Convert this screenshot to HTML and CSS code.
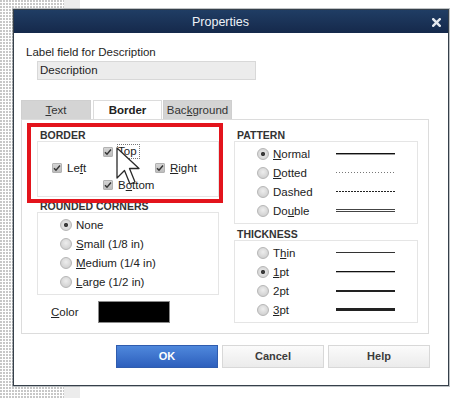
FILE: index.html
```html
<!DOCTYPE html>
<html>
<head>
<meta charset="utf-8">
<title>Properties</title>
<link rel="stylesheet" href="styles.css">
</head>
<body>
<div class="dialog">
  <div class="titlebar">
    <span class="title">Properties</span>
    <svg class="close" width="9" height="9" viewBox="0 0 9 9"><path d="M1.2 1.2 L7.8 7.8 M7.8 1.2 L1.2 7.8" stroke="#e4e8ee" stroke-width="2.4" stroke-linecap="square"/></svg>
  </div>
  <div class="content">
    <div class="field-label">Label field for Description</div>
    <div class="input">Description</div>

    <div class="tabs">
      <div class="tab t-text"><u>T</u>ext</div>
      <div class="tab t-border active">Border</div>
      <div class="tab t-bg">Bac<u>k</u>ground</div>
    </div>

    <div class="panel">
      <div class="col col-left">
        <div class="heading">BORDER</div>
        <div class="box border-box">
          <div class="cb cb-top"><span class="check"><svg width="8" height="8" viewBox="0 0 8 8"><path d="M1 4.2 L3 6.3 L7 1.5" fill="none" stroke="#333" stroke-width="1.4"/></svg></span><span class="focus"><u>T</u>op</span></div>
          <div class="cb cb-left"><span class="check"><svg width="8" height="8" viewBox="0 0 8 8"><path d="M1 4.2 L3 6.3 L7 1.5" fill="none" stroke="#333" stroke-width="1.4"/></svg></span><span>Le<u>f</u>t</span></div>
          <div class="cb cb-right"><span class="check"><svg width="8" height="8" viewBox="0 0 8 8"><path d="M1 4.2 L3 6.3 L7 1.5" fill="none" stroke="#333" stroke-width="1.4"/></svg></span><span><u>R</u>ight</span></div>
          <div class="cb cb-bottom"><span class="check"><svg width="8" height="8" viewBox="0 0 8 8"><path d="M1 4.2 L3 6.3 L7 1.5" fill="none" stroke="#333" stroke-width="1.4"/></svg></span><span>B<u>o</u>ttom</span></div>
        </div>

        <div class="heading gap-rc">ROUNDED CORNERS</div>
        <div class="box radio-box">
          <div class="row"><span class="radio on"></span><span>None</span></div>
          <div class="row"><span class="radio"></span><span><u>S</u>mall (1/8 in)</span></div>
          <div class="row"><span class="radio"></span><span><u>M</u>edium (1/4 in)</span></div>
          <div class="row"><span class="radio"></span><span><u>L</u>arge (1/2 in)</span></div>
        </div>

        <div class="color-row">
          <span class="color-label"><u>C</u>olor</span>
          <span class="swatch"></span>
        </div>
      </div>

      <div class="col col-right">
        <div class="heading">PATTERN</div>
        <div class="box radio-box lines">
          <div class="row"><span class="radio on"></span><span><u>N</u>ormal</span><span class="ln ln-normal"></span></div>
          <div class="row"><span class="radio"></span><span><u>D</u>otted</span><span class="ln ln-dotted"></span></div>
          <div class="row"><span class="radio"></span><span>Dashed</span><span class="ln ln-dashed"></span></div>
          <div class="row"><span class="radio"></span><span>Do<u>u</u>ble</span><span class="ln ln-double"></span></div>
        </div>

        <div class="heading gap-th">THICKNESS</div>
        <div class="box radio-box lines">
          <div class="row"><span class="radio"></span><span>T<u>h</u>in</span><span class="ln ln-thin"></span></div>
          <div class="row"><span class="radio on"></span><span><u>1</u>pt</span><span class="ln ln-1pt"></span></div>
          <div class="row"><span class="radio"></span><span>2pt</span><span class="ln ln-2pt"></span></div>
          <div class="row"><span class="radio"></span><span><u>3</u>pt</span><span class="ln ln-3pt"></span></div>
        </div>
      </div>

      <div class="annotation"></div>
      <svg class="cursor" width="25" height="40" viewBox="0 0 25 40"><path d="M1 1 L1 31 L8.5 23.5 L14 37 L19 35 L13.5 21.5 L23 21.5 Z" fill="#fff" stroke="#2a2a2a" stroke-width="1.3" stroke-linejoin="round"/></svg>
    </div>

    <div class="buttons">
      <div class="btn btn-ok">OK</div>
      <div class="btn">Cancel</div>
      <div class="btn">Help</div>
    </div>
  </div>
</div>
</body>
</html>
```

FILE: styles.css
```css
* { box-sizing: border-box; }

html, body { margin: 0; }

body {
  width: 461px;
  height: 398px;
  overflow: hidden;
  padding: 9px 0 0 13px;
  font-family: "Liberation Sans", Arial, sans-serif;
  font-size: 11.5px;
  color: #222;
  background:
    linear-gradient(90deg, transparent 64px, #ececec 64px, #ececec 80px, #fff 80px),
    radial-gradient(circle at 1px 1px, #c6c6c6 0.7px, transparent 1.1px) 0 0 / 3px 3px,
    #fff;
}

u { text-decoration: underline; text-underline-offset: 1px; }

.dialog {
  width: 436px;
  height: 377px;
  border: 1px solid #36404a;
  background: #fff;
  display: flex;
  flex-direction: column;
  box-shadow: 0 0 0 1px rgba(70, 80, 90, 0.35);
}

.titlebar {
  height: 23px;
  flex: none;
  display: flex;
  align-items: center;
  background: linear-gradient(#203d64, #15294b);
  color: #eef2f7;
}

.title {
  flex: 1;
  text-align: center;
  font-size: 12.5px;
}

.close {
  margin: 1px 7px 0 5px;
}

.content {
  padding: 0 0 0 7px;
  display: flex;
  flex-direction: column;
}

.field-label {
  margin-top: 12px;
  padding-left: 5px;
  line-height: 14px;
  color: #1e1e1e;
}

.input {
  margin: 2px 0 0 16px;
  width: 219px;
  height: 19px;
  border: 1px solid #d8d8d8;
  background: #ececec;
  padding-left: 2px;
  line-height: 17px;
  color: #1e1e1e;
}

.tabs {
  margin-top: 20px;
  height: 19px;
  display: flex;
  align-items: flex-end;
}

.tab {
  height: 19px;
  line-height: 19px;
  text-align: center;
  background: #d4d4d4;
  color: #333;
  border: 1px solid #cfcfcf;
  border-bottom: none;
}

.t-text { width: 70px; margin-right: 2px; }
.t-border { width: 69px; margin-right: 1px; }
.t-bg { width: 69px; }

.tab.active {
  position: relative;
  background: #fff;
  border-color: #dcdcdc;
  font-weight: bold;
  color: #222;
  height: 20px;
  margin-bottom: -1px;
  line-height: 18px;
}

.panel {
  position: relative;
  width: 408px;
  height: 215px;
  border: 1px solid #dcdcdc;
  display: flex;
  gap: 15px;
  padding: 10px 10px 0 15px;
}

.col { display: flex; flex-direction: column; }
.col-left { width: 182px; }
.col-right { width: 184px; }

.heading {
  font-size: 10.5px;
  font-weight: bold;
  line-height: 11px;
  height: 11px;
  padding-left: 3px;
  color: #333;
}

.gap-rc { margin-top: 4px; }
.gap-th { margin-top: 5px; }

.box {
  border: 1px solid #e5e5e5;
}

.border-box {
  height: 56px;
  display: grid;
  grid-template-columns: 51px 52px auto;
  grid-template-rows: 17px 16px 17px;
  padding: 1px 0 0 14px;
}

.cb {
  display: flex;
  align-items: center;
  gap: 5px;
  white-space: nowrap;
}

.cb-top { grid-column: 2; grid-row: 1; }
.cb-left { grid-column: 1; grid-row: 2; }
.cb-right { grid-column: 3; grid-row: 2; }
.cb-bottom { grid-column: 2; grid-row: 3; }

.check {
  flex: none;
  width: 10px;
  height: 10px;
  border: 1px solid #b2b2b2;
  border-radius: 1px;
  background: linear-gradient(#d4d4d4, #bdbdbd);
  display: flex;
  align-items: center;
  justify-content: center;
}

.focus {
  border: 1px dotted #777;
  line-height: 13px;
  padding-right: 2px;
  margin-left: -1px;
}

.radio-box {
  height: 83px;
  padding: 2px 0 0 22px;
}

.row {
  height: 19px;
  display: grid;
  grid-template-columns: 12px auto;
  column-gap: 4px;
  align-items: center;
  white-space: nowrap;
}

.lines .row {
  grid-template-columns: 12px 59px 59px;
}

.radio {
  width: 12px;
  height: 12px;
  border-radius: 50%;
  border: 1px solid #b6b6b6;
  background: radial-gradient(circle at 50% 40%, #ededed, #c8c8c8);
}

.radio.on {
  background: radial-gradient(circle, #3c3c3c 0 1.8px, #e2e2e2 2.4px, #cdcdcd);
}

.ln { display: block; }
.ln-normal { height: 1px; background: #111; box-shadow: 0 1px 0 #9a9a9a; }
.ln-dotted { height: 1px; background: repeating-linear-gradient(90deg, #777 0 1px, transparent 1px 3px); }
.ln-dashed { height: 1px; background: repeating-linear-gradient(90deg, #222 0 2px, transparent 2px 3px); }
.ln-double { height: 3px; border-top: 1px solid #444; border-bottom: 1px solid #444; }
.ln-thin { height: 1px; background: #333; }
.ln-1pt { height: 1px; background: #111; box-shadow: 0 1px 0 #bbb; }
.ln-2pt { height: 2px; background: #222; }
.ln-3pt { height: 3px; background: #222; }

.color-row {
  margin-top: 6px;
  height: 22px;
  display: flex;
  align-items: center;
  padding-left: 14px;
}

.color-label { width: 47px; }

.swatch {
  width: 72px;
  height: 22px;
  background: #000;
  border: 1px solid #8a8a8a;
}

.annotation {
  position: absolute;
  left: 5px;
  top: 3px;
  width: 196px;
  height: 80px;
  border: 4px solid #e3141c;
}

.cursor {
  position: absolute;
  left: 94px;
  top: 27px;
}

.buttons {
  margin-top: 11px;
  width: 409px;
  display: flex;
  justify-content: flex-end;
  gap: 4px;
}

.btn {
  width: 102px;
  height: 23px;
  line-height: 21px;
  text-align: center;
  font-size: 11px;
  font-weight: bold;
  color: #3c3c3c;
  border: 1px solid #d8d8d8;
  background: linear-gradient(#fbfbfb, #ebebeb);
}

.btn-ok {
  color: #fff;
  border-color: #2f5cae;
  background: linear-gradient(#4f88dc, #2d5fbd);
}
```
